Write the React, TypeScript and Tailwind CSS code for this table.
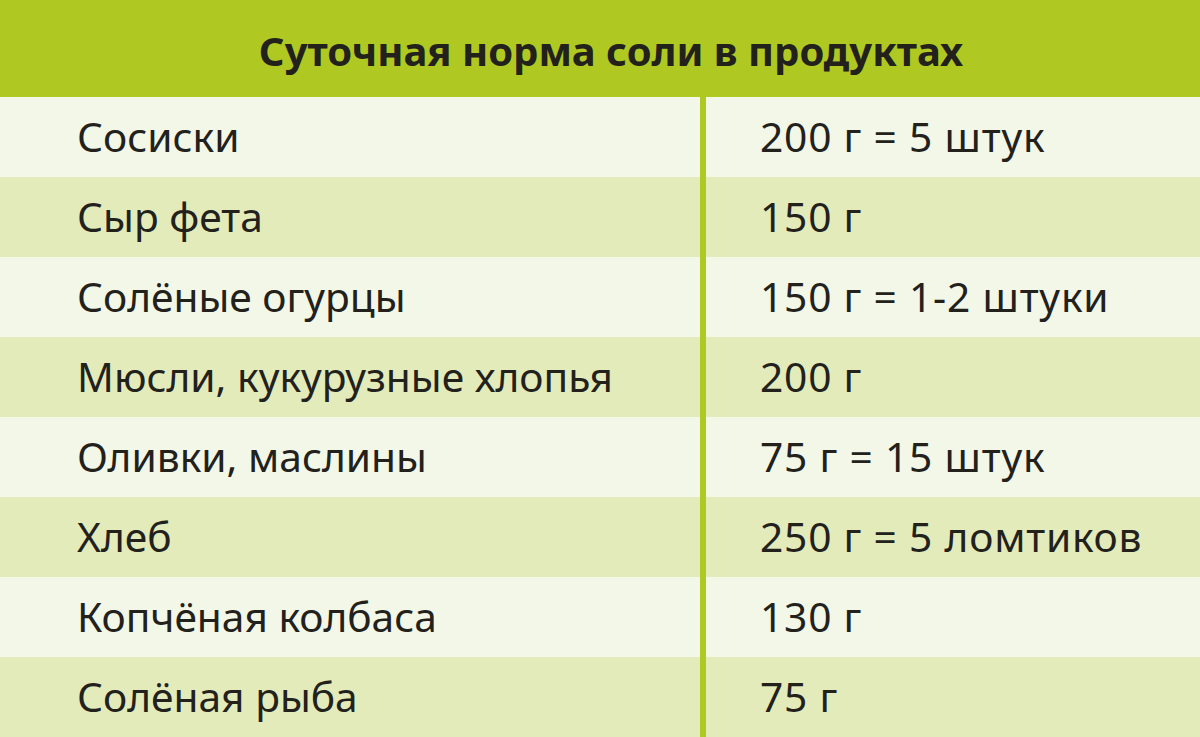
const rows: [string, string][] = [
  ['Сосиски', '200 г = 5 штук'],
  ['Сыр фета', '150 г'],
  ['Солёные огурцы', '150 г = 1-2 штуки'],
  ['Мюсли, кукурузные хлопья', '200 г'],
  ['Оливки, маслины', '75 г = 15 штук'],
  ['Хлеб', '250 г = 5 ломтиков'],
  ['Копчёная колбаса', '130 г'],
  ['Солёная рыба', '75 г'],
];

export default function App() {
  return (
    <div
      className="w-[1200px] h-[737px] bg-white text-[#22211c] overflow-hidden"
      style={{ fontFamily: '"Noto Sans", "Open Sans", sans-serif' }}
    >
      <div className="h-[97px] bg-[#afc922] flex items-center justify-center pt-[4px] pl-[22px]">
        <h1 className="text-[40px] font-bold">Суточная норма соли в продуктах</h1>
      </div>
      {rows.map(([name, amount], i) => (
        <div
          key={name}
          className={`flex h-[80px] items-center ${i % 2 === 0 ? 'bg-[#f3f7e7]' : 'bg-[#e3ebbb]'}`}
        >
          <div className="w-[700px] pl-[77px] text-[40.7px]">{name}</div>
          <div className="w-[6px] h-full bg-[#afc922]" />
          <div className="flex-1 pl-[54px] text-[40.7px] tracking-[0.8px]">{amount}</div>
        </div>
      ))}
    </div>
  );
}
